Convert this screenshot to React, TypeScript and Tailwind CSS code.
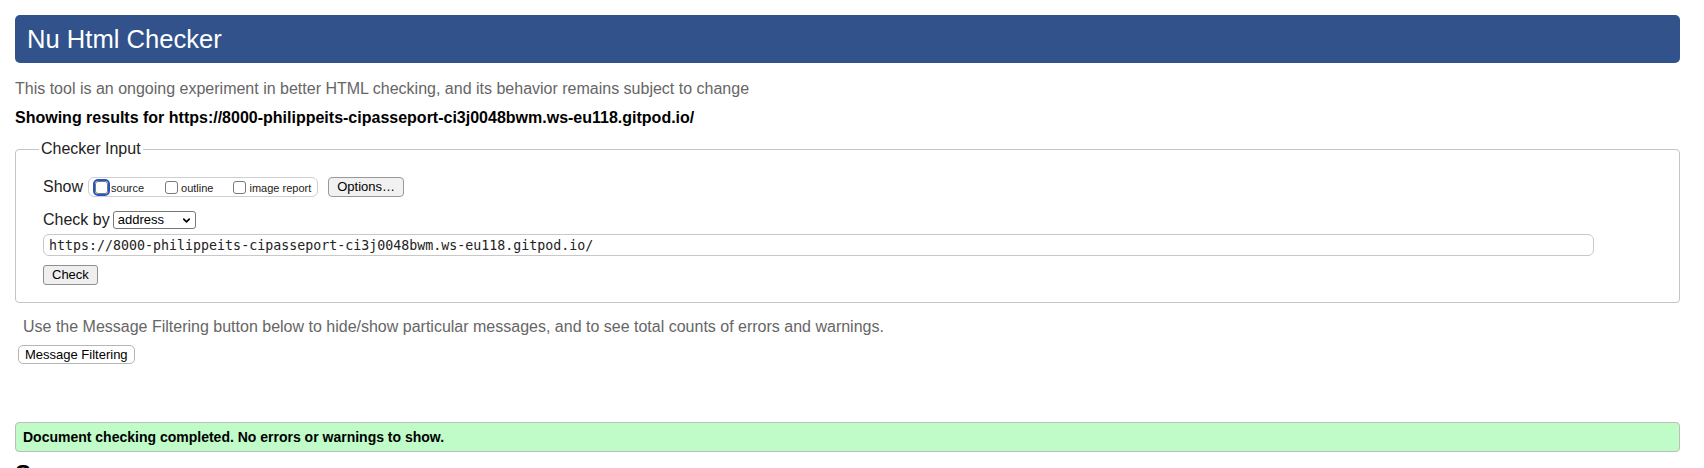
import { ChevronDown } from "lucide-react";

// small square checkbox, drawn so it looks like the macOS one in the shot
function Box({ focused = false }: { focused?: boolean }) {
  if (focused) {
    return (
      <span className="flex h-[17px] w-[17px] items-center justify-center rounded-[5px] border-2 border-[#2457c5]">
        <span className="h-[13px] w-[13px] rounded-[3px] border border-[#7a7a7a] bg-white" />
      </span>
    );
  }
  return <span className="h-[13px] w-[13px] rounded-[3px] border border-[#7a7a7a] bg-white" />;
}

export default function App() {
  const url = "https://8000-philippeits-cipasseport-ci3j0048bwm.ws-eu118.gitpod.io/";

  return (
    <div className="min-h-screen bg-white pl-[15px] pr-[24px] pt-[15px] font-['Liberation_Sans',Arial,sans-serif] text-[#222]">
      {/* ===== HEADER ===== */}
      <header className="flex h-[48px] items-center rounded-[5px] bg-[#31528a] pl-[12px] text-[25.6px] text-white">
        Nu Html Checker
      </header>

      <p className="mt-[17px] text-[16px] leading-[18px] text-[#666]">
        This tool is an ongoing experiment in better HTML checking, and its behavior remains subject to change
      </p>
      <p className="mt-[11px] text-[16px] font-bold leading-[18px] text-black">Showing results for {url}</p>

      {/* ===== CHECKER INPUT ===== */}
      <fieldset className="mt-[13px] rounded-[4px] border border-[#c4c4c4] pb-[17px] pl-[27px]">
        <legend className="-ml-[4px] px-[2px] text-[16px] leading-[18px]">Checker Input</legend>

        <div className="mt-[19px] flex items-center">
          <span className="text-[16px] leading-[18px]">Show</span>
          <div className="ml-[5px] flex h-[20px] items-center rounded-[6px] border border-[#cfcfcf] pl-[4px] pr-[6px] text-[11px]">
            <Box focused />
            <span className="ml-[1px] mr-[21px] pt-[2px]">source</span>
            <Box />
            <span className="ml-[3px] mr-[20px] pt-[2px]">outline</span>
            <Box />
            <span className="ml-[3px] pt-[2px]">image report</span>
          </div>
          <button className="ml-[10px] flex h-[20px] items-center rounded-[4px] border border-[#999] bg-[#f1f1f1] px-[8px] text-[13px] text-black">
            Options…
          </button>
        </div>

        <div className="mt-[14px] flex items-center">
          <span className="text-[16px] leading-[18px]">Check by</span>
          <div className="ml-[3px] flex h-[18px] w-[83px] items-center justify-between rounded-[3px] border border-[#777] bg-white pl-[4px] pr-[3px] text-[13px] text-black">
            address
            <ChevronDown size={11} strokeWidth={3.5} />
          </div>
        </div>

        <input
          readOnly
          value={url}
          className="mt-[5px] block h-[22px] w-[1551px] rounded-[6px] border border-[#c8c8c8] pl-[5px] font-['DejaVu_Sans_Mono',monospace] text-[13.3px] text-[#222] outline-none"
        />

        <button className="mt-[9px] flex h-[20px] items-center rounded-[3px] border border-[#8f8f8f] bg-[#efefef] px-[8px] text-[13px] text-black">
          Check
        </button>
      </fieldset>

      {/* ===== FILTERING ===== */}
      <p className="ml-[8px] mt-[15px] text-[16px] leading-[18px] text-[#666]">
        Use the Message Filtering button below to hide/show particular messages, and to see total counts of errors and warnings.
      </p>
      <button className="ml-[3px] mt-[9px] flex h-[19px] items-center rounded-[5px] border border-[#b5b5b5] bg-white px-[6px] text-[13px] text-black">
        Message Filtering
      </button>

      {/* ===== RESULT ===== */}
      <div className="mt-[58px] flex h-[30px] items-center rounded-[4px] border border-[#bdbdbd] bg-[#c0fcc8] pl-[7px] text-[14px] font-bold text-black">
        Document checking completed. No errors or warnings to show.
      </div>

      <h2 className="mt-[8px] text-[24px] font-bold leading-[28px] text-black">Source</h2>
    </div>
  );
}
